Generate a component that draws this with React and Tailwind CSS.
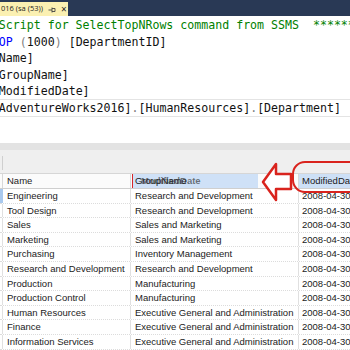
import React from "react";

const rows = [
  ["Engineering", "Research and Development"],
  ["Tool Design", "Research and Development"],
  ["Sales", "Sales and Marketing"],
  ["Marketing", "Sales and Marketing"],
  ["Purchasing", "Inventory Management"],
  ["Research and Development", "Research and Development"],
  ["Production", "Manufacturing"],
  ["Production Control", "Manufacturing"],
  ["Human Resources", "Executive General and Administration"],
  ["Finance", "Executive General and Administration"],
  ["Information Services", "Executive General and Administration"],
];

const Kw = ({ children }) => <span className="text-[#0000ff]">{children}</span>;
const Gr = ({ children }) => <span className="text-[#808080]">{children}</span>;

function TabBar() {
  return (
    <div className="h-[16px] bg-[#293955] flex items-end">
      <div className="h-[14px] w-[68px] bg-[#fbf0b2] flex items-center gap-[5px] pl-[1px] text-[7.5px] text-[#1e1e1e] font-['Open_Sans',sans-serif] leading-none whitespace-nowrap overflow-hidden">
        <span>016 (sa (53))</span>
        <svg width="8" height="8" viewBox="0 0 8 8" className="mt-[1px] shrink-0">
          <path d="M0.5 4H4M4 1.5V6.5M4 2.5H7M4 5.5H7M7 2.5V5.5" stroke="#444" strokeWidth="0.9" fill="none" />
        </svg>
        <span className="text-[10px] leading-none">×</span>
      </div>
    </div>
  );
}

function Editor() {
  return (
    <div className="h-[127px] pt-[1px] bg-white overflow-hidden font-['DejaVu_Sans_Mono',monospace] text-[11.6px] leading-[16.6px] whitespace-pre text-[#111]">
      <div className="-ml-[57px] text-[#008000]">/****** Script for SelectTopNRows command from SSMS  ******/</div>
      <div className="-ml-[57px]">
        <Kw>SELECT TOP </Kw>
        <Gr>(</Gr>1000<Gr>) </Gr>[DepartmentID]
      </div>
      <div className="-ml-[57px]">
        <Gr>      ,</Gr>[Name]
      </div>
      <div className="-ml-[57px]">
        <Gr>      ,</Gr>[GroupName]
      </div>
      <div className="-ml-[57px]">
        <Gr>      ,</Gr>[ModifiedDate]
      </div>
      <div className="h-[18px] -mt-[1px] border-y border-[#e4e4e4] leading-[16px]">
        <div className="-ml-[57px]">
          <Kw>  FROM </Kw>[AdventureWorks2016]<Gr>.</Gr>[HumanResources]<Gr>.</Gr>[Department]
        </div>
      </div>
    </div>
  );
}

function Grid() {
  return (
    <div className="font-['Liberation_Sans',Arial,sans-serif] text-[9.5px] text-[#1b1b1b]">
      <div className="h-[7px] bg-[#e3e3e3]" />
      <div className="h-[24px] bg-[#efefef] border-b border-[#d6d6d6] flex items-end pb-[3px]">
        <div className="ml-[2px] w-[1px] h-[14px] bg-[#cfcfcf]" />
      </div>
      <div className="h-[15px] grid grid-cols-[3px_128px_168px_1fr] bg-[#fbfbfb] border-b border-[#cfcfcf] leading-[14px]">
        <div className="border-r border-[#d8d8d8]" />
        <div className="pl-[4px] border-r border-[#d8d8d8]">Name</div>
        <div className="relative pl-[4px] border-r border-[#d8d8d8] whitespace-nowrap">
          <div className="absolute left-[1px] top-0 w-[126px] h-[14px] bg-[#cfe1f7]" />
          <span className="relative">GroupName</span>
          <span className="absolute left-[10px] top-0 text-[#222]/60 font-bold">ModifiedDate</span>
          <div className="absolute left-[1px] top-0 w-[1px] h-[14px] bg-[#d8262a]" />
        </div>
        <div className="pl-[3px] bg-[#cde0f6] whitespace-nowrap">ModifiedDate</div>
      </div>
      {rows.map(([name, group], i) => (
        <div
          key={i}
          className="h-[14.6px] grid grid-cols-[3px_128px_168px_1fr] border-b border-dotted border-[#dcdcdc] leading-[14px] whitespace-nowrap overflow-hidden"
        >
          <div className={i === 0 ? "bg-[#a9c9ee]" : "border-r border-[#e0e0e0]"} />
          <div className="pl-[4px] border-r border-[#e0e0e0]">{name}</div>
          <div className="pl-[4px] border-r border-[#e0e0e0]">{group}</div>
          <div className="pl-[3px]">2008-04-30 00:00:00.000</div>
        </div>
      ))}
    </div>
  );
}

export default function App() {
  return (
    <div className="relative w-[350px] h-[350px] overflow-hidden bg-white">
      <TabBar />
      <Editor />
      <Grid />
      {/* annotation: hollow arrow */}
      <svg className="absolute left-[258px] top-[158px]" width="40" height="46" viewBox="0 0 40 46">
        <path
          d="M5 24 L18 6 L18 16 L33 16 L33 31 L18 31 L18 42 Z"
          fill="white"
          stroke="#d9231d"
          strokeWidth="2.5"
          strokeLinejoin="round"
        />
      </svg>
      {/* annotation: rounded frame round the header */}
      <div className="absolute left-[292px] top-[161px] w-[76px] h-[32px] border-[2.5px] border-[#d9231d] rounded-[13px]" />
    </div>
  );
}
